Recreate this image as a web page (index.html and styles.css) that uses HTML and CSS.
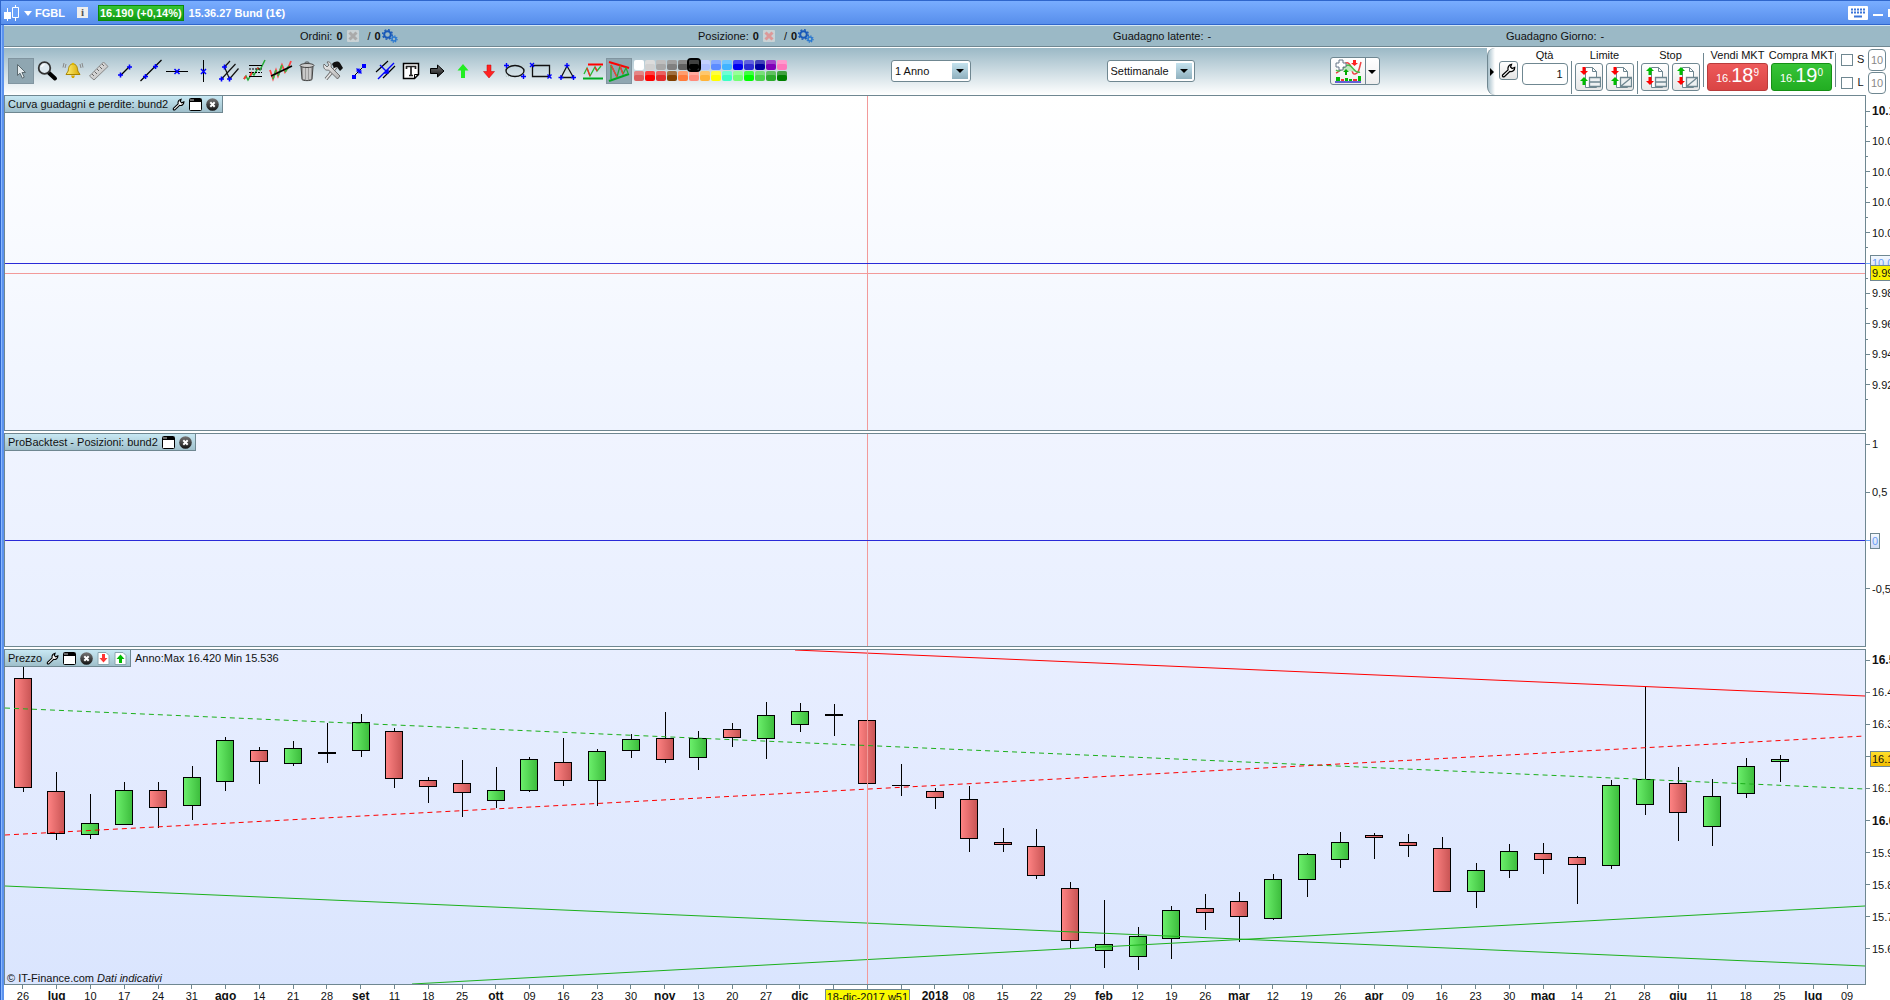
FILE: index.html
```html
<!DOCTYPE html>
<html lang="it">
<head>
  <meta charset="UTF-8">
  <meta name="viewport" content="width=device-width, initial-scale=1.0">
  <title>FGBL - Bund (1€)</title>
  <link rel="stylesheet" href="styles.css">
</head>
<body>
  <svg class="sprite" aria-hidden="true">
    <defs>
      <linearGradient id="metal" x1="0" y1="0" x2="1" y2="1"><stop offset="0" stop-color="#f4f4f4"/><stop offset="1" stop-color="#b0b0b0"/></linearGradient>
      <linearGradient id="gold" x1="0" y1="0" x2="1" y2="0"><stop offset="0" stop-color="#fff27a"/><stop offset="1" stop-color="#d8a800"/></linearGradient>
      <linearGradient id="dark" x1="0" y1="0" x2="0" y2="1"><stop offset="0" stop-color="#777"/><stop offset="1" stop-color="#111"/></linearGradient>
    </defs>
    <symbol id="i-wrench" viewBox="0 0 14 14"><path d="M1.500 11.200 6.600 6.400C6 4 7.300 1.700 9.800 1.300L8.900 3.700 10.400 5.200 12.800 4.200C12.900 6.800 10.600 8.600 8.200 7.900L3.100 12.800C1.900 13.300.900 12.400 1.500 11.200z" fill="#fff" stroke="#000" stroke-width="1.200"/></symbol>
    <symbol id="i-window" viewBox="0 0 13 13"><rect x=".5" y=".5" width="12" height="12" rx="1" fill="#fff" stroke="#000"/><path d="M1 1h11v3H1z" fill="#000"/><path d="M1 1h4v2H1z" fill="#666"/></symbol>
    <symbol id="i-close" viewBox="0 0 13 13"><circle cx="6.500" cy="6.500" r="6.300" fill="url(#dark)"/><path d="M4.300 4.300l4.400 4.400M8.700 4.300l-4.400 4.400" stroke="#fff" stroke-width="2"/></symbol>
    <symbol id="i-page-down" viewBox="0 0 13 13"><path d="M1 .5h8l3 3v9H1z" fill="#fff" stroke="#8aa6b0"/><path d="M5 2h3v4h2.500L6.500 10.500 2.500 6H5z" fill="#f33"/></symbol>
    <symbol id="i-page-up" viewBox="0 0 13 13"><path d="M1 .5h8l3 3v9H1z" fill="#fff" stroke="#8aa6b0"/><path d="M5 11h3V7h2.500L6.500 2.500 2.500 7H5z" fill="#0b0"/></symbol>
    <symbol id="i-gears" viewBox="0 0 16 14"><circle cx="5.500" cy="5.500" r="3.300" fill="none" stroke="#1858b8" stroke-width="2"/><circle cx="5.500" cy="5.500" r="4.800" fill="none" stroke="#1858b8" stroke-width="1.500" stroke-dasharray="1.900 1.870"/><circle cx="12" cy="10" r="2" fill="none" stroke="#2a78d0" stroke-width="1.500"/><circle cx="12" cy="10" r="3.100" fill="none" stroke="#2a78d0" stroke-width="1.200" stroke-dasharray="1.200 1.230"/></symbol>
    <symbol id="i-cancel" viewBox="0 0 12 12"><rect width="12" height="12" rx="1" fill="#c9d2d5"/><path d="M2.500 2.500l7 7M9.500 2.500l-7 7" stroke="currentColor" stroke-width="3"/></symbol>

    <symbol id="t-cursor" viewBox="0 0 24 24"><path d="M8.500 5.500v11l2.500-2.300 2.300 5 2-1-2.300-4.700h3.500z" fill="#e6ecee" stroke="#5b6a70"/></symbol>
    <symbol id="t-zoom" viewBox="0 0 24 24"><path d="M13.500 13.500l6.500 6" stroke="#000" stroke-width="4" stroke-linecap="round"/><circle cx="9.500" cy="9" r="5.800" fill="#dfeaf0" stroke="#333" stroke-width="1.800"/><path d="M6.500 8a3.500 3.500 0 0 1 3-2.500" fill="none" stroke="#fff" stroke-width="1.500"/></symbol>
    <symbol id="t-bell" viewBox="0 0 24 24"><path d="M12 5c4 0 4.500 4 4.800 7l2.200 3.500H5L7.200 12C7.500 9 8 5 12 5z" fill="url(#gold)" stroke="#a88400"/><circle cx="12" cy="5" r="1.300" fill="#e0b800"/><path d="M10 16.500h4l-1 2.500h-2z" fill="#d8a800"/><path d="M5 5L4 9M3 4L2 8.500M19 5l1 4M21 4l1 4.500" stroke="#888" fill="none"/></symbol>
    <symbol id="t-ruler" viewBox="0 0 24 24"><path d="M2.500 17L16.500 3l4.500 4.500L7 21z" fill="url(#metal)" stroke="#888"/><path d="M5 15l2 2M7.500 12.500l2.500 2.500M10 10l2 2M12.500 7.500L15 10M15 5l2 2" stroke="#666"/></symbol>
    <symbol id="t-segment" viewBox="0 0 24 24"><path d="M8 16l8-8" stroke="#000" stroke-width="1.300"/><path d="M5 16h5M7.500 13.500v5M14 8h5M16.500 5.500v5" stroke="#00f" stroke-width="1.600"/></symbol>
    <symbol id="t-line" viewBox="0 0 24 24"><path d="M1.500 22L22.500 1" stroke="#000" stroke-width="1.300"/><path d="M4 17.500h5M6.500 15v5M14 7.500h5M16.500 5v5" stroke="#00f" stroke-width="1.600"/></symbol>
    <symbol id="t-hline" viewBox="0 0 24 24"><path d="M1 12.500h22" stroke="#000"/><path d="M9.500 10l5 5M14.500 10l-5 5" stroke="#00f" stroke-width="1.500"/></symbol>
    <symbol id="t-vline" viewBox="0 0 24 24"><path d="M12.500 1v22" stroke="#000"/><path d="M10 10l5 5M15 10l-5 5" stroke="#00f" stroke-width="1.500"/></symbol>
    <symbol id="t-fork" viewBox="0 0 24 24"><path d="M7.500 8L13 2M4.500 20L18.500 5M12.500 20L21.500 9.500M7.500 8l5 12" stroke="#111" stroke-width="1.200"/><path d="M5 8h5M7.500 5.500v5M2 20h5M4.500 17.500v5M10 20h5M12.500 17.500v5" stroke="#00f" stroke-width="1.600"/></symbol>
    <symbol id="t-fibo" viewBox="0 0 24 24"><path d="M1 20l2-3 2 4 4-7 2 2 4-7 2 2 5-10" fill="none" stroke="#2a3" stroke-width="1.500"/><path d="M1 20l2-3M7 17l2-4M14 9l2 1" stroke="#f33" stroke-width="1.800"/><path d="M6 6.500h13M6 17.500h13" stroke="#000"/><path d="M6 10h13M6 13.500h13" stroke="#000" stroke-dasharray="2 1"/></symbol>
    <symbol id="t-zigzag" viewBox="0 0 24 24"><path d="M1 11l3 9 3-9 2 6 4-11 3 7 4-6 2-5" fill="none" stroke="#f44" stroke-width="1.800"/><path d="M4 20l3-9M9 17l4-11M16 13l4-6" stroke="#3b4" stroke-width="1.800"/><path d="M2 17L23 7" stroke="#000" stroke-width="1.500"/></symbol>
    <symbol id="t-trash" viewBox="0 0 24 24"><path d="M6 7.500h12l-1 13c-1 1.500-9 1.500-10 0z" fill="#999" stroke="#444"/><path d="M9 9v11M12 9v12M15 9v11" stroke="#e8e8e8" stroke-width="1.200"/><ellipse cx="12" cy="6.500" rx="7" ry="2" fill="#ccc" stroke="#444"/><path d="M9.500 4.500c0-2 5-2 5 0" fill="none" stroke="#444"/></symbol>
    <symbol id="t-tools" viewBox="0 0 24 24"><path d="M5 20L15 8" stroke="#666" stroke-width="3.500"/><path d="M5 20L15 8" stroke="#e6e6e6" stroke-width="1.800"/><path d="M11 5c3-3 6-3 8-1l3 5-3 3-3-4-3 1z" fill="#111"/><path d="M3 5l3 3 2-2-2-3c3-1 5 2 4 5l9 9-2.500 3-9-9c-3 1-6-2-4.500-6z" fill="url(#metal)" stroke="#555" stroke-width=".8"/></symbol>
    <symbol id="t-segment-mid" viewBox="0 0 24 24"><path d="M7.500 16.500l9-9" stroke="#000"/><path d="M5 16h4v4H5zM15 5h4v4h-4z" fill="#00f"/><path d="M9.500 9.500l5 5M12 9.500v5M9.500 12h5" stroke="#00f" stroke-width="1.400"/></symbol>
    <symbol id="t-channel" viewBox="0 0 24 24"><path d="M3 13L15 2M10 19L22 7" stroke="#000" stroke-width="1.200"/><path d="M5 20L21 4M7 6l8 8M11 14h4v-4" fill="none" stroke="#00f" stroke-width="1.400"/></symbol>
    <symbol id="t-text" viewBox="0 0 24 24"><path d="M4.500 4.500h15v11l-4 4h-11z" fill="#fff" stroke="#000" stroke-width="1.500"/><path d="M15.500 19.500v-4h4" fill="none" stroke="#000"/><path d="M7.500 10V7.500h9V10M12 7.500v9M10 16.500h4" fill="none" stroke="#222" stroke-width="1.700"/></symbol>
    <symbol id="t-right" viewBox="0 0 24 24"><path d="M5.500 9.500h7V6l6.500 6-6.500 6v-3.500h-7z" fill="url(#dark)" stroke="#000"/></symbol>
    <symbol id="t-up" viewBox="0 0 24 24"><path d="M12 5l5.500 6.500H14V19h-4v-7.500H6.500z" fill="#2e2"/></symbol>
    <symbol id="t-down" viewBox="0 0 24 24"><path d="M12 19l5.500-6.500H14V6h-4v6.500H6.500z" fill="#f22" stroke="#c00" stroke-width=".5"/></symbol>
    <symbol id="t-ellipse" viewBox="0 0 24 24"><path d="M3 6.500h18v11H3z" fill="none" stroke="#bcc" stroke-dasharray="1 1"/><ellipse cx="12" cy="12" rx="9" ry="5.500" fill="none" stroke="#111" stroke-width="1.300"/><path d="M1 6.500h5M3.500 4v5M18 17.500h5M20.500 15v5" stroke="#00f" stroke-width="1.400"/></symbol>
    <symbol id="t-rect" viewBox="0 0 24 24"><path d="M3.500 6.500h17v11h-17z" fill="none" stroke="#111" stroke-width="1.300"/><path d="M1 4l4 4M5 4L1 8M18.500 15.500l4 4M22.500 15.500l-4 4" stroke="#00f" stroke-width="1.400"/></symbol>
    <symbol id="t-triangle" viewBox="0 0 24 24"><path d="M12 7L6 18.500h12.500z" fill="none" stroke="#111" stroke-width="1.300"/><path d="M9.500 6.500h5M12 4v5M3.500 18.500h5M6 16v5M16 18.500h5M18.500 16v5" stroke="#00f" stroke-width="1.400"/></symbol>
    <symbol id="t-range" viewBox="0 0 24 24"><path d="M7 5.500h15" stroke="#f00" stroke-width="2"/><path d="M2 19.500h20" stroke="#0a2" stroke-width="2"/><path d="M3 15l3-6 3 8 5-9 2 4 4-5" fill="none" stroke="#2b3" stroke-width="1.300"/><path d="M6 9l3 8M14 8l2 4" stroke="#f22" stroke-width="1.300"/></symbol>
    <symbol id="t-pattern" viewBox="0 0 24 24"><path d="M2 3l20 6" stroke="#f00" stroke-width="2.200"/><path d="M2 22l20-7" stroke="#0a2" stroke-width="2.200"/><path d="M4 20V6l6 12 3-11 3 8 3-6 2 5" fill="none" stroke="#2a3" stroke-width="1.300"/><path d="M4 6l6 12M13 7l3 8" stroke="#f33" stroke-width="1.300"/></symbol>

    <symbol id="i-order-line" viewBox="0 0 24 24"><path d="M8.500 2.500h7l4 4v16h-11z" fill="#fff" stroke="#6f8791"/><path d="M15.500 2.500v4h4" fill="none" stroke="#6f8791"/><path d="M12.500 12.500h11v9h-11zM12.500 17h11" fill="#eef1f2" stroke="#6f8791" stroke-width="1.300"/></symbol>
    <symbol id="i-order-diag" viewBox="0 0 24 24"><path d="M8.500 2.500h7l4 4v16h-11z" fill="#fff" stroke="#6f8791"/><path d="M15.500 2.500v4h4" fill="none" stroke="#6f8791"/><path d="M12.500 12.500h11v9h-11zM12.500 21.500l11-9" fill="#eef1f2" stroke="#6f8791" stroke-width="1.300"/></symbol>
    <symbol id="i-in" viewBox="0 0 8 18"><path d="M2.500 0h3v4H8L4 8 0 4h2.500z" fill="#f00"/><path d="M2.500 18h3v-4H8L4 10l-4 4h2.500z" fill="#0b0"/></symbol>
    <symbol id="i-out" viewBox="0 0 8 18"><path d="M2.500 8h3V4H8L4 0 0 4h2.500z" fill="#0b0"/><path d="M2.500 10h3v4H8l-4 4-4-4h2.500z" fill="#f00"/></symbol>
  </svg>

  <div class="app">
    <header class="titlebar">
      <svg class="logo" viewBox="0 0 16 16"><path d="M3.500 3v13M11.500 0v16" stroke="#fff"/><path d="M0 7h7v7H0z" fill="#fff"/><path d="M8.500 2.500h6v10h-6z" fill="#6ba3fa" stroke="#fff"/></svg>
      <svg class="caret" viewBox="0 0 8 5"><path d="M0 0h8L4 5z" fill="#fff"/></svg>
      <span class="ticker">FGBL</span>
      <span class="info">i</span>
      <span class="quote">16.190 (+0,14%)</span>
      <span class="market">15.36.27 Bund (1€)</span>
      <svg class="keyboard" viewBox="0 0 20 14"><rect width="20" height="14" rx="1" fill="#fff"/><path d="M3 3.500h14M3 6.500h14" stroke="#3b74d8" stroke-width="2" stroke-dasharray="2 1"/><path d="M6 10.500h8" stroke="#3b74d8" stroke-width="2"/></svg>
      <span class="minimize"></span>
      <span class="maximize"></span>
    </header>

    <section class="status">
      <div class="status-item">Ordini: <b>0</b><svg class="cancel grey"><use href="#i-cancel"/></svg><span>/</span><b>0</b><svg class="gears"><use href="#i-gears"/></svg></div>
      <div class="status-item">Posizione: <b>0</b><svg class="cancel red"><use href="#i-cancel"/></svg><span>/</span><b>0</b><svg class="gears"><use href="#i-gears"/></svg></div>
      <div class="status-item">Guadagno latente: <span>-</span></div>
      <div class="status-item">Guadagno Giorno: <span>-</span></div>
    </section>

    <section class="toolbar">
      <div class="tools" id="tools"></div>
      <div class="swatches" id="swatches"></div>
      <div class="views">
        <div class="combo period">
          <select aria-label="Periodo"><option>1 Anno</option></select>
        </div>
        <div class="combo timeframe">
          <select aria-label="Intervallo"><option>Settimanale</option></select>
        </div>
        <button class="indicators" aria-label="Indicatori">
          <svg class="indicators-icon" viewBox="0 0 28 24"><path d="M2 14c6-2 7-12 12-10s3 12 7 11 4-5 6-12" fill="none" stroke="#e44" stroke-width="1.500"/><path d="M2 11c5 4 7-5 12-5s6 9 12 7" fill="#bfe8bf" stroke="#4b4" stroke-width="1.500"/><path d="M5 1h4v3h3v4H9v3H5V8H2V4h3z" fill="#fff" stroke="#678"/><path d="M11 16v-3H9l3-3 3 3h-2v3z" fill="#0a0"/><path d="M19 1h3v3h2l-3.500 3L17 4h2z" fill="#f22"/><path d="M2 18h4v4H2zM11 19h3v3h-3zM15 20h3v2h-3zM24 17h3v5h-3z" fill="#0b0"/><path d="M7 20h3v2H7zM19 20h4v2h-4z" fill="#e33"/><path d="M1 23h26" stroke="#33c" stroke-width="1.500"/></svg>
          <span class="drop"></span>
        </button>
      </div>

      <form class="order">
        <span class="handle"></span>
        <button type="button" class="mini" aria-label="Impostazioni"><svg class="mini-icon"><use href="#i-wrench"/></svg></button>
        <div class="field qty">
          <label for="qty">Qtà</label>
          <input id="qty" type="text" value="1">
        </div>
        <fieldset class="field">
          <legend>Limite</legend>
          <div class="order-buttons">
            <button type="button" aria-label="Limite"><svg class="sheet"><use href="#i-order-line"/></svg><svg class="arrows"><use href="#i-in"/></svg></button>
            <button type="button" aria-label="Limite obliquo"><svg class="sheet"><use href="#i-order-diag"/></svg><svg class="arrows"><use href="#i-in"/></svg></button>
          </div>
        </fieldset>
        <fieldset class="field">
          <legend>Stop</legend>
          <div class="order-buttons">
            <button type="button" aria-label="Stop"><svg class="sheet"><use href="#i-order-line"/></svg><svg class="arrows"><use href="#i-out"/></svg></button>
            <button type="button" aria-label="Stop obliquo"><svg class="sheet"><use href="#i-order-diag"/></svg><svg class="arrows"><use href="#i-out"/></svg></button>
          </div>
        </fieldset>
        <div class="field market-orders">
          <div class="deal">
            <span class="deal-name">Vendi MKT</span>
            <button type="button" class="price sell">16.<span class="big">18</span><span class="pip">9</span></button>
          </div>
          <div class="deal">
            <span class="deal-name">Compra MKT</span>
            <button type="button" class="price buy">16.<span class="big">19</span><span class="pip">0</span></button>
          </div>
        </div>
        <div class="field protections">
          <div class="protection"><input type="checkbox" id="sl"><label for="sl">S</label><input type="text" value="10" aria-label="Distanza S"><span>€</span></div>
          <div class="protection"><input type="checkbox" id="tp"><label for="tp">L</label><input type="text" value="10" aria-label="Distanza L"><span>€</span></div>
        </div>
      </form>
    </section>

    <main class="charts">
      <section class="pane pane-equity">
        <div class="plot">
          <svg class="canvas" id="equity"></svg>
          <div class="tab">Curva guadagni e perdite: bund2
            <svg class="tab-icon"><use href="#i-wrench"/></svg><svg class="tab-icon"><use href="#i-window"/></svg><svg class="tab-icon"><use href="#i-close"/></svg>
          </div>
        </div>
        <ol class="axis">
          <li class="strong">10.100</li><li class="minor"></li>
          <li>10.080</li><li class="minor"></li>
          <li>10.060</li><li class="minor"></li>
          <li>10.040</li><li class="minor"></li>
          <li>10.020</li><li class="minor"></li>
          <li class="level"><span class="tag tag-level">10.000</span></li><li class="minor"></li>
          <li>9.980</li><li class="minor"></li>
          <li>9.960</li><li class="minor"></li>
          <li>9.940</li><li class="minor"></li>
          <li>9.920</li><li class="minor"></li>
        </ol>
        <span class="tag tag-cursor">9.993</span>
      </section>

      <section class="pane pane-positions">
        <div class="plot">
          <svg class="canvas" id="positions"></svg>
          <div class="tab">ProBacktest - Posizioni: bund2
            <svg class="tab-icon"><use href="#i-window"/></svg><svg class="tab-icon"><use href="#i-close"/></svg>
          </div>
        </div>
        <ol class="axis">
          <li>1</li>
          <li>0,5</li>
          <li class="level"><span class="tag tag-level">0</span></li>
          <li>-0,5</li>
        </ol>
      </section>

      <section class="pane pane-price">
        <div class="plot">
          <svg class="canvas" id="price"></svg>
          <div class="tab">Prezzo
            <svg class="tab-icon"><use href="#i-wrench"/></svg><svg class="tab-icon"><use href="#i-window"/></svg><svg class="tab-icon"><use href="#i-close"/></svg><svg class="tab-icon"><use href="#i-page-down"/></svg><svg class="tab-icon"><use href="#i-page-up"/></svg>
          </div>
          <p class="extremes">Anno:Max 16.420 Min 15.536</p>
          <p class="credits">© IT-Finance.com <em>Dati indicativi</em></p>
        </div>
        <ol class="axis">
          <li class="strong">16.500</li>
          <li>16.400</li>
          <li>16.300</li>
          <li class="blank"></li>
          <li>16.100</li>
          <li class="strong">16.000</li>
          <li>15.900</li>
          <li>15.800</li>
          <li>15.700</li>
          <li>15.600</li>
        </ol>
        <span class="tag tag-last">16.190</span>
      </section>

      <ol class="dates" id="dates"></ol>
    </main>
  </div>

  <script src="script.js"></script>
</body>
</html>
```
FILE: styles.css
```css
:root {
  --line: #6f8791;
  --bar: #9bb9c6;
  --blue: #5b92ee;
  --ink: #111;
}

* {
  margin: 0;
  padding: 0;
  box-sizing: border-box;
}

body {
  font-family: "Liberation Sans", Arial, sans-serif;
  font-size: 11px;
  color: var(--ink);
  overflow: hidden;
}

button,
input,
select {
  font: inherit;
  color: inherit;
}

ol {
  list-style: none;
}

.sprite {
  position: absolute;
  width: 0;
  height: 0;
}

.app {
  display: flex;
  flex-direction: column;
  height: 100vh;
  padding-left: 4px;
  background: linear-gradient(90deg, #2f66cc 1px, #8ab8ff 1px 2px, var(--blue) 2px 4px, #fff 4px);
  overflow: hidden;
}

/* Title bar */
.titlebar {
  display: flex;
  align-items: center;
  flex: none;
  height: 25px;
  margin-left: -3px;
  padding-left: 3px;
  border-top: 1px solid #2f66cc;
  border-bottom: 1px solid #2f66cc;
  background: linear-gradient(#79adff, #578eeb);
  color: #fff;
  font-weight: 700;
  white-space: nowrap;
}

.logo {
  width: 16px;
  height: 16px;
}

.caret {
  width: 8px;
  height: 5px;
  margin: 2px 3px 0 4px;
}

.info {
  width: 11px;
  margin: 0 10px 0 12px;
  background: #eee;
  color: #555;
  font-family: "Liberation Serif", serif;
  line-height: 11px;
  text-align: center;
}

.quote {
  height: 16px;
  padding: 0 1px;
  border: 1px solid #0a8a0a;
  background: linear-gradient(#35c435, #0f9a0f);
  line-height: 14px;
}

.market {
  margin-left: 5px;
}

.keyboard {
  width: 20px;
  height: 14px;
  margin-left: auto;
}

.minimize {
  width: 10px;
  height: 2px;
  margin: 4px 5px 0;
  background: #fff;
}

.maximize {
  width: 2px;
  height: 8px;
  background: #fff;
}

/* Orders and gains summary */
.status {
  display: grid;
  grid-template-columns: 398fr 415fr 393fr 384fr;
  flex: none;
  align-items: center;
  height: 22px;
  padding-left: 296px;
  border-top: 1px solid #d5e8f5;
  border-bottom: 1px solid var(--line);
  background: var(--bar);
}

.status-item {
  display: flex;
  align-items: center;
  gap: 4px;
}

.cancel {
  width: 12px;
  height: 12px;
}

.cancel + span {
  margin-left: 5px;
}

.grey {
  color: #aaa;
}

.red {
  color: #d99;
}

.gears {
  width: 16px;
  height: 14px;
  margin-left: -3px;
}

/* Toolbar */
.toolbar {
  display: flex;
  align-items: center;
  flex: none;
  height: 48px;
  padding: 0 0 2px 4px;
  border-top: 1px solid #fff;
  background: linear-gradient(var(--bar), #fff);
}

.tools {
  display: flex;
  flex: none;
}

.tool {
  width: 26px;
  height: 26px;
  border: 1px solid transparent;
  background: none;
}

.tool.active {
  border-color: #8195a0;
  background: #8fa6b1;
}

.tool-icon {
  display: block;
  width: 24px;
  height: 24px;
}

.swatches {
  display: grid;
  grid-template-columns: repeat(14, 10px);
  gap: 1px;
  flex: none;
  margin-left: 2px;
}

.swatch {
  height: 10px;
  border: 0;
  border-radius: 2px;
  box-shadow: inset 0 4px 0 rgba(255, 255, 255, 0.25);
}

.swatch.active {
  position: relative;
  z-index: 1;
  outline: 2px solid #000;
}

.views {
  display: flex;
  flex: 1;
  justify-content: space-between;
  align-items: center;
  padding: 0 107px 0 104px;
}

.combo {
  position: relative;
}

.combo select {
  width: 100%;
  height: 22px;
  padding-left: 3px;
  border: 1px solid var(--line);
  border-radius: 3px;
  appearance: none;
  background: #fff;
}

.combo::before {
  content: "";
  position: absolute;
  top: 3px;
  right: 3px;
  width: 16px;
  height: 16px;
  background: linear-gradient(#c4e2ee, #8fb0be);
  pointer-events: none;
}

.combo::after,
.drop::after {
  content: "";
  position: absolute;
  top: 9px;
  right: 7px;
  border: 4px solid transparent;
  border-top: 4px solid #000;
  border-bottom: 0;
  pointer-events: none;
}

.period {
  width: 80px;
}

.timeframe {
  width: 88px;
}

.indicators {
  display: flex;
  width: 50px;
  height: 28px;
  border: 1px solid var(--line);
  border-radius: 3px;
  background: linear-gradient(#fff, #eee);
}

.indicators-icon {
  width: 34px;
  height: 26px;
  padding: 1px 2px;
}

.drop {
  position: relative;
  flex: 1;
  align-self: stretch;
  border-left: 1px solid var(--line);
}

.drop::after {
  top: 12px;
  right: 3px;
}

/* Order entry, runs past the right edge of the window */
.order {
  display: flex;
  flex: none;
  align-self: flex-start;
  width: 403px;
  height: 47px;
  background: #fff;
  overflow: hidden;
}

.order > * {
  flex: none;
}

.handle {
  position: relative;
  width: 8px;
  margin-right: 4px;
  border-left: 1px solid var(--line);
  border-radius: 8px 0 0 8px;
  background: linear-gradient(90deg, #a9c1cc, #fff);
}

.handle::after {
  content: "";
  position: absolute;
  top: 20px;
  left: 2px;
  border: 4px solid transparent;
  border-left: 4px solid #000;
  border-right: 0;
}

.mini {
  width: 19px;
  height: 19px;
  margin-top: 13px;
  border: 1px solid var(--line);
  border-radius: 3px;
  background: linear-gradient(#fff, #e4e4e4);
}

.mini-icon {
  display: block;
  width: 15px;
  height: 15px;
  margin: 1px;
}

.field {
  padding: 0 3px;
  border: 0;
  white-space: nowrap;
}

.qty {
  width: 53px;
  text-align: center;
}

.field label,
.field legend,
.deal-name {
  display: block;
  line-height: 15px;
  text-align: center;
}

.field legend {
  width: 100%;
}

.qty input {
  width: 46px;
  height: 22px;
  padding-right: 4px;
  border: 1px solid var(--line);
  border-radius: 4px;
  text-align: right;
}

.field + .field {
  border-left: 1px solid var(--line);
  border-image: linear-gradient(transparent 6px, var(--line) 6px 38px, transparent 38px) 1;
  border-width: 0 0 0 1px;
  border-style: solid;
}

fieldset.field {
  width: 66px;
}

.order-buttons {
  display: flex;
  gap: 3px;
}

.order-buttons button {
  position: relative;
  width: 28px;
  height: 28px;
  border: 1px solid var(--line);
  border-radius: 3px;
  background: linear-gradient(#fff, #e8e8e8);
}

.sheet {
  position: absolute;
  top: 1px;
  left: 1px;
  width: 24px;
  height: 24px;
}

.arrows {
  position: absolute;
  top: 3px;
  left: 4px;
  width: 8px;
  height: 18px;
}

.market-orders {
  display: flex;
  gap: 3px;
}

.deal {
  width: 61px;
}

.deal-name {
  display: flex;
  justify-content: center;
}

.price {
  display: flex;
  align-items: baseline;
  justify-content: center;
  width: 100%;
  height: 28px;
  border: 1px solid;
  border-radius: 3px;
}

.big {
  font-size: 20px;
}

.pip {
  font-size: 10px;
  align-self: flex-start;
  margin-top: 3px;
}

.sell {
  border-color: #b83c3c;
  background: linear-gradient(#ee5a5a, #d94444);
  color: #fff;
}

.buy {
  border-color: #159015;
  background: linear-gradient(#37c437, #22ad22);
  color: #fff;
}

.protections {
  padding-left: 5px;
}

.protection {
  display: flex;
  align-items: center;
  gap: 4px;
  height: 23px;
}

.protection input[type="checkbox"] {
  width: 12px;
  height: 12px;
  border: 1px solid var(--line);
  appearance: none;
}

.protection label {
  width: 7px;
}

.protection input[type="text"] {
  width: 18px;
  height: 22px;
  border: 1px solid var(--line);
  border-radius: 4px;
  color: #888;
  text-align: center;
}

/* Charts */
.charts {
  display: flex;
  flex-direction: column;
  flex: 1;
  min-height: 0;
}

.pane {
  position: relative;
  display: flex;
  min-height: 0;
  margin-bottom: 2px;
}

.pane-equity {
  flex: 336 1 0;
}

.pane-positions {
  flex: 214 1 0;
}

.pane-price {
  flex: 336 1 0;
  margin-bottom: 0;
}

.plot {
  position: relative;
  flex: 1;
  border: 1px solid var(--line);
}

.pane-equity .plot {
  background: linear-gradient(#fff, #eff4ff);
}

.pane-positions .plot {
  background: linear-gradient(#f0f4ff, #e8efff);
}

.pane-price .plot {
  background: linear-gradient(#e8eeff, #dae5fe);
}

.canvas {
  position: absolute;
  width: 100%;
  height: 100%;
}

.tab {
  position: absolute;
  top: 0;
  left: 0;
  display: flex;
  align-items: center;
  gap: 4px;
  height: 17px;
  padding: 0 3px;
  border-right: 1px solid var(--line);
  border-bottom: 1px solid var(--line);
  background: linear-gradient(#c8e8f3, #9fbfcb);
  white-space: nowrap;
}

.tab-icon {
  width: 13px;
  height: 13px;
}

.extremes {
  position: absolute;
  top: 1px;
  left: 130px;
  line-height: 14px;
}

.credits {
  position: absolute;
  bottom: 0;
  left: 2px;
  line-height: 12px;
}

.axis {
  display: flex;
  flex-direction: column;
  justify-content: space-between;
  width: 24px;
  overflow: hidden;
}

.pane-equity .axis {
  padding: 16px 0 31px;
}

.pane-positions .axis {
  padding: 11px 0 58px;
}

.pane-price .axis {
  padding: 11px 0 36px;
}

.axis li {
  display: flex;
  align-items: center;
  gap: 2px;
  height: 0;
  white-space: nowrap;
}

.axis li::before {
  content: "";
  flex: none;
  width: 4px;
  height: 1px;
  background: var(--line);
}

.axis .minor::before {
  width: 2px;
}

.axis .level::before {
  background: #6aa5ff;
}

.strong {
  font-size: 12px;
  font-weight: 700;
}

.tag {
  padding: 0 1px;
  border: 1px solid var(--line);
  line-height: 14px;
}

.tag-level {
  margin-left: -2px;
  background: linear-gradient(#f4f9ff, #cfdcf2);
  color: #6a9cf5;
}

.tag-cursor,
.tag-last {
  position: absolute;
  right: 0;
  width: 20px;
  overflow: hidden;
  border-right: 0;
}

.tag-cursor {
  top: 170px;
  background: #f8f000;
}

.tag-last {
  top: 102px;
  background: linear-gradient(#ffe02a, #f2bd00);
}

.dates {
  display: grid;
  grid-template-columns: repeat(55, minmax(0, 1fr));
  flex: none;
  height: 15px;
  margin: 0 26px 0 2px;
}

.dates li {
  display: flex;
  flex-direction: column;
  align-items: center;
  line-height: 14px;
  white-space: nowrap;
}

.dates li::before {
  content: "";
  flex: none;
  width: 1px;
  height: 4px;
  background: var(--line);
}

.dates .current {
  position: relative;
  z-index: 1;
}

.dates .current span {
  padding: 0 1px;
  border: 1px solid var(--line);
  background: #f9f900;
}

/* Drawn series */
.candle {
  stroke: #000;
  stroke-width: 1;
  shape-rendering: crispEdges;
}

.up {
  fill: url(#fill-up);
}

.down {
  fill: url(#fill-down);
}

.trend {
  fill: none;
  stroke-width: 1;
}

.trend.green {
  stroke: #1cb01c;
}

.trend.crimson {
  stroke: #f00;
}

.dashed {
  stroke-dasharray: 5 4;
}

.series {
  stroke: #2a2ad8;
  shape-rendering: crispEdges;
}

.cursor {
  stroke: #f29a9a;
  shape-rendering: crispEdges;
}
```
FILE: script.js
```js
var SLOTS = 55;
var CURRENT = 25;

var tools = ['cursor', 'zoom', 'bell', 'ruler', 'segment', 'line', 'hline', 'vline', 'fork', 'fibo', 'zigzag', 'trash',
  'tools', 'segment-mid', 'channel', 'text', 'right', 'up', 'down', 'ellipse', 'rect', 'triangle', 'range', 'pattern'];

var colors = ['#ffffff', '#d0d0d0', '#a8a8a8', '#808080', '#606060', '#000000', '#b0c0ff', '#5c8cff', '#40b4ff', '#0000f0', '#2c2cd4', '#0000a0', '#8000b8', '#ff78bc',
  '#dc5c5c', '#ff0000', '#e42c2c', '#804000', '#ff7c3c', '#ff8c7c', '#ffb438', '#ffff00', '#3cffc4', '#74ff74', '#00ff00', '#4cd44c', '#2cac2c', '#008000'];

var dates = ['26', 'lug', '10', '17', '24', '31', 'ago', '14', '21', '28', 'set', '11', '18', '25', 'ott', '09', '16', '23', '30',
  'nov', '13', '20', '27', 'dic', '', '18-dic-2017 w51', '', '2018', '08', '15', '22', '29', 'feb', '12', '19', '26', 'mar', '12',
  '19', '26', 'apr', '09', '16', '23', '30', 'mag', '14', '21', '28', 'giu', '11', '18', '25', 'lug', '09'];

// high, body top, body bottom, low, on a 334 unit scale
var candles = [
  [17, 28, 138, 142, 'down'], [122, 141, 184, 190, 'down'], [144, 173, 185, 189, 'up'], [132, 140, 175, 175, 'up'],
  [132, 140, 158, 178, 'down'], [116, 127, 156, 170, 'up'], [87, 90, 132, 141, 'up'], [97, 100, 112, 134, 'down'],
  [91, 98, 114, 116, 'up'], [73, 102, 104, 113, 'up'], [64, 72, 101, 107, 'up'], [78, 81, 129, 138, 'down'],
  [127, 130, 137, 153, 'down'], [110, 133, 143, 167, 'down'], [117, 140, 151, 158, 'up'], [107, 109, 141, 142, 'up'],
  [88, 112, 131, 136, 'down'], [99, 101, 131, 156, 'up'], [84, 89, 101, 108, 'up'], [62, 88, 110, 113, 'down'],
  [81, 88, 108, 120, 'up'], [73, 79, 88, 97, 'down'], [52, 65, 89, 109, 'up'], [53, 61, 75, 82, 'up'],
  [54, 64, 66, 86, 'up'], [67, 70, 134, 137, 'down'], [114, 135, 136, 146, 'down'], [138, 141, 148, 159, 'down'],
  [136, 149, 189, 202, 'down'], [178, 192, 195, 202, 'down'], [179, 196, 226, 229, 'down'], [232, 238, 291, 298, 'down'],
  [250, 294, 301, 318, 'up'], [277, 286, 307, 320, 'up'], [256, 260, 289, 309, 'up'], [244, 258, 263, 280, 'down'],
  [242, 251, 267, 292, 'down'], [224, 229, 269, 270, 'up'], [203, 204, 230, 247, 'up'], [182, 192, 210, 218, 'up'],
  [183, 185, 188, 209, 'down'], [184, 192, 196, 207, 'down'], [187, 198, 242, 242, 'down'], [213, 220, 242, 258, 'up'],
  [194, 201, 221, 228, 'up'], [193, 203, 210, 224, 'down'], [206, 207, 215, 254, 'down'], [130, 135, 216, 219, 'up'],
  [36, 129, 155, 165, 'up'], [117, 133, 163, 191, 'down'], [129, 146, 177, 196, 'up'], [108, 116, 144, 148, 'up'],
  [105, 109, 112, 132, 'up']
];

// x on a 1860 unit scale, y on a 334 unit scale
var trends = [
  [0, 58, 1860, 139, 'green dashed'],
  [0, 185, 1860, 86, 'crimson dashed'],
  [0, 236, 1860, 316, 'green'],
  [407, 334, 1860, 256, 'green'],
  [790, 0, 1860, 46, 'crimson']
];

function byId(id) {
  return document.getElementById(id);
}

function slotX(i, w) {
  return Math.floor(1.2 + (w - 1.5) * (i + 0.5) / SLOTS);
}

function line(x1, y1, x2, y2, cls) {
  return '<line x1="' + x1 + '" y1="' + y1 + '" x2="' + x2 + '" y2="' + y2 + '" class="' + cls + '"/>';
}

function drawLevel(id, level, crosshair) {
  var svg = byId(id);
  var w = svg.clientWidth;
  var h = svg.clientHeight;
  var y = Math.floor(h * level) + 0.5;
  var x = slotX(CURRENT, w) + 0.5;
  var out = line(x, 0, x, h, 'cursor') + line(0, y, w, y, 'series');
  if (crosshair) {
    var cy = Math.floor(h * crosshair) + 0.5;
    out += line(0, cy, w, cy, 'cursor');
  }
  svg.innerHTML = out;
}

function drawPrice() {
  var svg = byId('price');
  var w = svg.clientWidth;
  var h = svg.clientHeight;
  var k = h / 334;
  var out = '<defs>' +
    '<linearGradient id="fill-up"><stop offset="0" stop-color="#6cf06c"/><stop offset="1" stop-color="#3cbc3c"/></linearGradient>' +
    '<linearGradient id="fill-down"><stop offset="0" stop-color="#ff8484"/><stop offset="1" stop-color="#c85454"/></linearGradient>' +
    '</defs>';

  candles.forEach(function (c, i) {
    var x = slotX(i, w);
    var top = Math.round(c[1] * k);
    var height = Math.max(Math.round(c[2] * k) - top - 1, 0);
    out += line(x + 0.5, Math.round(c[0] * k), x + 0.5, Math.round(c[3] * k), 'candle');
    if (height) {
      out += '<rect x="' + (x - 8.5) + '" y="' + (top + 0.5) + '" width="17" height="' + height + '" class="candle ' + c[4] + '"/>';
    } else {
      out += line(x - 9, top + 0.5, x + 9, top + 0.5, 'candle');
    }
  });

  trends.forEach(function (t) {
    out += line(t[0] * w / 1860, t[1] * k, t[2] * w / 1860, t[3] * k, 'trend ' + t[4]);
  });

  var cx = slotX(CURRENT, w) + 0.5;
  out += line(cx, 0, cx, h, 'cursor');
  svg.innerHTML = out;
}

function draw() {
  drawLevel('equity', 0.502, 0.531);
  drawLevel('positions', 0.5);
  drawPrice();
}

byId('tools').innerHTML = tools.map(function (name) {
  var active = name === 'cursor' || name === 'pattern' ? ' active' : '';
  return '<button class="tool' + active + '" aria-label="' + name + '"><svg class="tool-icon"><use href="#t-' + name + '"/></svg></button>';
}).join('');

byId('swatches').innerHTML = colors.map(function (color) {
  var active = color === '#000000' ? ' active' : '';
  return '<button class="swatch' + active + '" aria-label="' + color + '" style="background-color: ' + color + '"></button>';
}).join('');

byId('dates').innerHTML = dates.map(function (d, i) {
  var cls = i === CURRENT ? 'current' : /^[a-z]|2018/.test(d) ? 'strong' : '';
  return '<li class="' + cls + '"><span>' + d + '</span></li>';
}).join('');

draw();
window.addEventListener('resize', draw);
```
